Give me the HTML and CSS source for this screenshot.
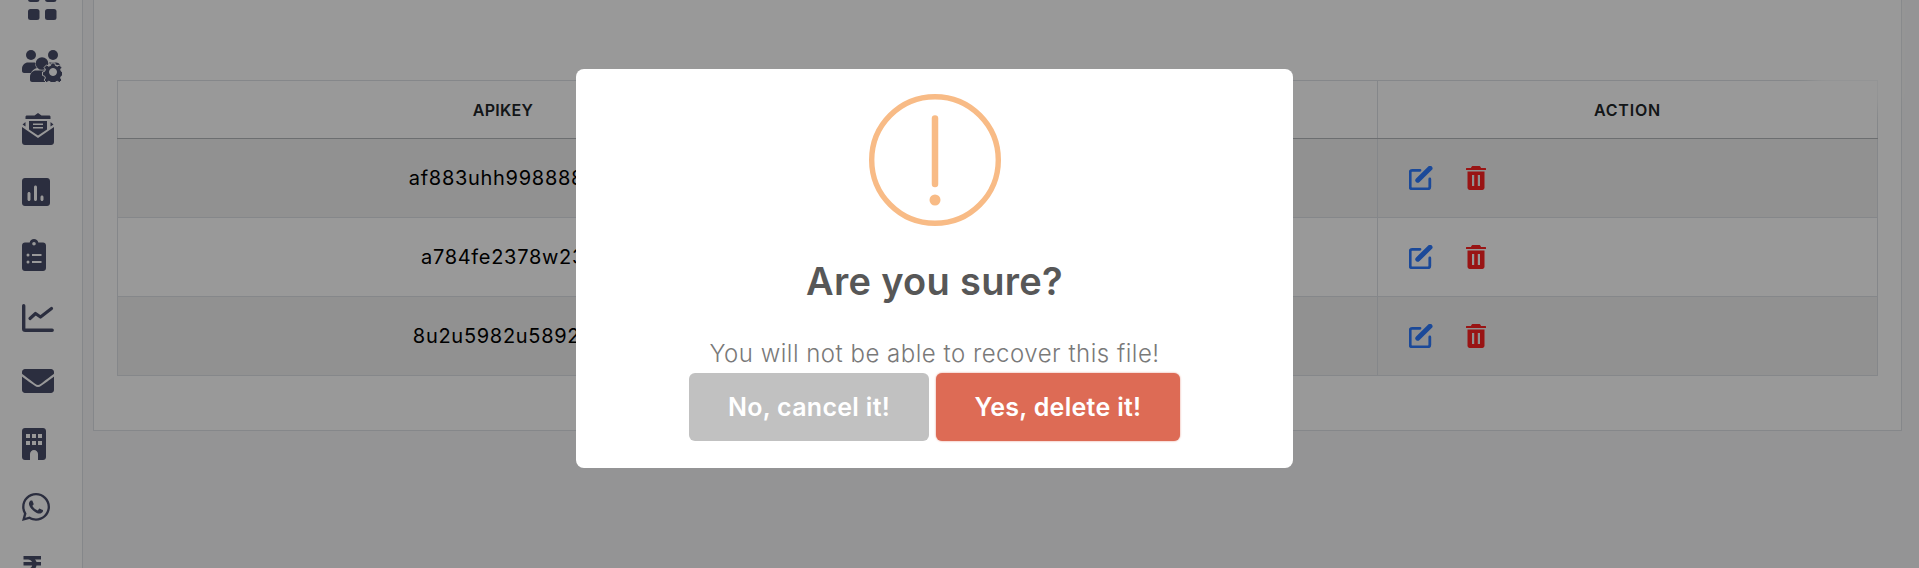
FILE: index.html
```html
<!DOCTYPE html>
<html lang="en">
<head>
  <meta charset="UTF-8">
  <meta name="viewport" content="width=device-width, initial-scale=1.0">
  <title>API Keys</title>
  <link rel="stylesheet" href="styles.css">
</head>
<body>
  <nav class="sidebar">
    <a class="side-item"><svg width="29" height="29" viewBox="0 0 29 29"><rect x="0" y="0" width="11.500" height="11" rx="2.500"/><rect x="17" y="0" width="11.500" height="11" rx="2.500"/><rect x="0" y="18" width="11.500" height="11" rx="2.500"/><rect x="17" y="18" width="11.500" height="11" rx="2.500"/></svg></a>
    <a class="side-item"><svg width="40" height="32" viewBox="0 0 40 32"><circle cx="9" cy="5" r="5"/><circle cx="31" cy="5" r="5"/><circle cx="20" cy="13.500" r="6.300"/><path d="M0 19c0-4 3-6.500 6-6.500h6c1 0 1.500.5 1.500 1-.5 2 .5 3.500 1.500 4.500-3 1-5 2.500-6 5H2c-1 0-2-1-2-2z"/><path d="M27 12.500h7c2 0 3.500 1 4.500 3-3 -1-6-1-8 0-1-.5-2-.5-3.500-3z"/><path d="M8 27c0-4 3-6.500 6-6.500h10c.5 2 .5 4 0 5-1 1-1 4 0 5.500l.5 1H10c-1 0-2-1-2-2z"/><path fill-rule="evenodd" d="M29.200 14.500h3.600l.6 2.400 1.900.8 2.100-1.300 2.500 2.500-1.300 2.100.8 1.900 2.100.6v3.500l-2.100.6-.8 1.900 1.300 2.100-2.500 2.500-2.100-1.300-1.900.8-.6 1.900h-3.600l-.6-1.900-1.900-.8-2.100 1.300-2.500-2.500 1.300-2.100-.8-1.900-2.100-.6v-3.500l2.100-.6.8-1.900-1.300-2.100 2.500-2.500 2.100 1.300 1.900-.8zM31 20a3.500 3.500 0 1 0 0 7 3.500 3.500 0 0 0 0-7z" transform="translate(0 -1.500)" stroke="#fff" stroke-width="1"/></svg></a>
    <a class="side-item"><svg width="32" height="32" viewBox="0 0 32 32"><path fill-rule="evenodd" d="M16 0l3.500 2.500H27c1 0 1.500.5 1.500 1.500v5l3 2.500-3 2v-7.500H3.500v7.500l-3-2 3-2.500V4c0-1 .5-1.500 1.500-1.500h7.500zM7 8h18v8.500l-9 6-9-6zM11 10.500v1.500h10v-1.500zM11 14v1.500h10V14z"/><path d="M0 14l16 11 16-11v15c0 1.700-1.300 3-3 3H3c-1.700 0-3-1.300-3-3z"/></svg></a>
    <a class="side-item"><svg width="28" height="28" viewBox="0 0 28 28"><path fill-rule="evenodd" d="M3 0h22c1.700 0 3 1.300 3 3v22c0 1.700-1.300 3-3 3H3c-1.700 0-3-1.300-3-3V3C0 1.300 1.300 0 3 0zM7 14c-.8 0-1.500.7-1.500 1.500v6c0 .8.7 1.500 1.500 1.500s1.500-.7 1.500-1.500v-6C8.500 14.700 7.800 14 7 14zM13.500 7.500c-.8 0-1.500.7-1.500 1.500v12.500c0 .8.700 1.500 1.500 1.500s1.500-.7 1.500-1.500V9c0-.8-.7-1.500-1.500-1.500zM20 17.500c-.8 0-1.500.7-1.500 1.500v2.500c0 .8.700 1.500 1.500 1.500s1.500-.7 1.500-1.500V19c0-.8-.7-1.500-1.500-1.500z"/></svg></a>
    <a class="side-item"><svg width="24" height="32" viewBox="0 0 24 32"><path fill-rule="evenodd" d="M12 0c2.200 0 4 1.500 4.300 3.500H21c1.700 0 3 1.300 3 3V29c0 1.700-1.300 3-3 3H3c-1.700 0-3-1.300-3-3V6.500c0-1.700 1.300-3 3-3h4.700C8 1.500 9.800 0 12 0zM12 3a1.800 1.800 0 1 0 0 3.600A1.800 1.800 0 0 0 12 3zM6 14.500a1.500 1.500 0 1 0 0 3 1.500 1.500 0 0 0 0-3zM10 15v2h9.500v-2zM6 21.500a1.500 1.500 0 1 0 0 3 1.500 1.500 0 0 0 0-3zM10 22v2h9.500v-2z"/></svg></a>
    <a class="side-item"><svg width="32" height="28" viewBox="0 0 32 28"><path d="M1.700 1.700V24.800c0 .8.7 1.500 1.500 1.500h27" fill="none" stroke-width="3.400" stroke-linecap="round" stroke="currentColor"/><path d="M8 14.500l5.500-5 5 3.500L29.500 4.500" fill="none" stroke-width="3.200" stroke-linecap="round" stroke-linejoin="round" stroke="currentColor"/></svg></a>
    <a class="side-item"><svg width="32" height="32" viewBox="0 0 512 512"><path d="M502.300 190.800c3.900-3.100 9.700-.2 9.700 4.700V400c0 26.500-21.500 48-48 48H48c-26.500 0-48-21.500-48-48V195.600c0-5 5.700-7.800 9.700-4.700 22.400 17.400 52.100 39.500 154.100 113.600 21.100 15.400 56.700 47.800 92.200 47.600 35.700.3 72-32.800 92.300-47.600 102-74.100 131.600-96.300 154-113.700zM256 320c23.200.4 56.600-29.200 73.400-41.400 132.700-96.300 142.800-104.700 173.400-128.700 5.800-4.500 9.200-11.500 9.200-18.900v-19c0-26.500-21.500-48-48-48H48C21.500 64 0 85.500 0 112v19c0 7.400 3.400 14.300 9.200 18.900 30.600 23.900 40.700 32.400 173.400 128.700 16.800 12.200 50.200 41.800 73.400 41.400z"/></svg></a>
    <a class="side-item"><svg width="24" height="32" viewBox="0 0 24 32"><path fill-rule="evenodd" d="M3 0h18c1.700 0 3 1.300 3 3v26c0 1.700-1.300 3-3 3h-5v-6c0-2.200-1.800-4-4-4s-4 1.800-4 4v6H3c-1.700 0-3-1.300-3-3V3C0 1.300 1.300 0 3 0zM4 6v4h4V6zM10 6v4h4V6zM16 6v4h4V6zM4 13v4h4v-4zM10 13v4h4v-4zM16 13v4h4v-4z"/></svg></a>
    <a class="side-item"><svg width="28" height="32" viewBox="0 0 448 512"><path d="M380.900 97.100C339 55.100 283.200 32 223.900 32c-122.400 0-222 99.600-222 222 0 39.100 10.200 77.300 29.600 111L0 480l117.700-30.900c32.400 17.700 68.900 27 106.100 27h.1c122.300 0 224.100-99.600 224.100-222 0-59.300-25.200-115-67.100-157zm-157 341.600c-33.200 0-65.700-8.900-94-25.700l-6.700-4-69.800 18.300L72 359.200l-4.400-7c-18.500-29.400-28.200-63.300-28.200-98.200 0-101.700 82.800-184.500 184.600-184.500 49.300 0 95.600 19.200 130.400 54.100 34.800 34.900 56.200 81.200 56.100 130.500 0 101.800-84.900 184.600-186.600 184.600zm101.200-138.200c-5.500-2.800-32.800-16.200-37.900-18-5.100-1.900-8.800-2.800-12.500 2.800-3.700 5.600-14.300 18-17.600 21.800-3.200 3.700-6.500 4.200-12 1.400-32.600-16.300-54-29.100-75.500-66-5.700-9.800 5.700-9.100 16.300-30.300 1.800-3.700.9-6.900-.5-9.700-1.400-2.800-12.500-30.100-17.100-41.200-4.500-10.800-9.100-9.300-12.500-9.500-3.200-.2-6.900-.2-10.600-.2-3.700 0-9.700 1.400-14.800 6.900-5.100 5.600-19.400 19-19.400 46.300 0 27.300 19.900 53.700 22.600 57.400 2.800 3.700 39.100 59.700 94.800 83.800 35.200 15.200 49 16.500 66.600 13.900 10.700-1.600 32.800-13.400 37.400-26.400 4.600-13 4.600-24.100 3.200-26.400-1.300-2.500-5-3.900-10.500-6.600z"/></svg></a>
    <a class="side-item"><svg width="20" height="32" viewBox="0 0 20 32"><path d="M1.500 2h17.500v3.500H13c.8 1 1.300 1.700 1.500 2.500H19v3.500h-4.500c-.7 3.700-3.700 6-8 6.200L15 30h-5l-8.500-12v-3.500H6c2.200 0 3.800-1.200 4.200-3H1.500V8h8.500c-.6-1.500-2-2.500-4-2.500H1.500z"/></svg></a>
  </nav>

  <main class="content">
    <section class="card">
      <table class="key-table">
        <colgroup>
          <col class="col-key">
          <col class="col-mid">
          <col class="col-action">
        </colgroup>
        <thead>
          <tr>
            <th>APIKEY</th>
            <th></th>
            <th class="head-action">ACTION</th>
          </tr>
        </thead>
        <tbody>
          <tr>
            <td class="key">af883uhh9988888</td>
            <td></td>
            <td class="actions">
              <a class="act"><svg class="ic-edit" width="24" height="24" viewBox="0 0 24 24"><path d="M11 4.300H3a1.800 1.800 0 0 0-1.800 1.800V21a1.800 1.800 0 0 0 1.800 1.800h16a1.800 1.800 0 0 0 1.800-1.800v-8" fill="none" stroke="currentColor" stroke-width="2.800" stroke-linecap="round"/><path d="M8.800 14.200L21 2.300" fill="none" stroke="currentColor" stroke-width="5" stroke-linecap="round"/></svg></a>
              <a class="act"><svg class="ic-trash" width="20" height="24" viewBox="0 0 20 24"><path fill-rule="evenodd" d="M7 0h6c1 0 1.500.5 2 2h4.500c.3 0 .5.200.5.500V4H0V2.500c0-.3.200-.5.500-.5H5c.5-1.500 1-2 2-2zM1.500 5.500h17v16.300c0 1.200-1 2.200-2.200 2.200H3.700c-1.200 0-2.200-1-2.200-2.200zM6 9v11h2.200V9zM11.800 9v11H14V9z"/></svg></a>
            </td>
          </tr>
          <tr>
            <td class="key">a784fe2378w23</td>
            <td></td>
            <td class="actions">
              <a class="act"><svg class="ic-edit" width="24" height="24" viewBox="0 0 24 24"><path d="M11 4.300H3a1.800 1.800 0 0 0-1.800 1.800V21a1.800 1.800 0 0 0 1.800 1.800h16a1.800 1.800 0 0 0 1.800-1.800v-8" fill="none" stroke="currentColor" stroke-width="2.800" stroke-linecap="round"/><path d="M8.800 14.200L21 2.300" fill="none" stroke="currentColor" stroke-width="5" stroke-linecap="round"/></svg></a>
              <a class="act"><svg class="ic-trash" width="20" height="24" viewBox="0 0 20 24"><path fill-rule="evenodd" d="M7 0h6c1 0 1.500.5 2 2h4.500c.3 0 .5.200.5.500V4H0V2.500c0-.3.200-.5.500-.5H5c.5-1.500 1-2 2-2zM1.500 5.500h17v16.300c0 1.200-1 2.200-2.200 2.200H3.700c-1.200 0-2.200-1-2.200-2.200zM6 9v11h2.200V9zM11.800 9v11H14V9z"/></svg></a>
            </td>
          </tr>
          <tr>
            <td class="key">8u2u5982u58925</td>
            <td></td>
            <td class="actions">
              <a class="act"><svg class="ic-edit" width="24" height="24" viewBox="0 0 24 24"><path d="M11 4.300H3a1.800 1.800 0 0 0-1.800 1.800V21a1.800 1.800 0 0 0 1.800 1.800h16a1.800 1.800 0 0 0 1.800-1.800v-8" fill="none" stroke="currentColor" stroke-width="2.800" stroke-linecap="round"/><path d="M8.800 14.200L21 2.300" fill="none" stroke="currentColor" stroke-width="5" stroke-linecap="round"/></svg></a>
              <a class="act"><svg class="ic-trash" width="20" height="24" viewBox="0 0 20 24"><path fill-rule="evenodd" d="M7 0h6c1 0 1.500.5 2 2h4.500c.3 0 .5.200.5.500V4H0V2.500c0-.3.200-.5.500-.5H5c.5-1.500 1-2 2-2zM1.500 5.500h17v16.300c0 1.200-1 2.200-2.200 2.200H3.700c-1.200 0-2.200-1-2.200-2.200zM6 9v11h2.200V9zM11.800 9v11H14V9z"/></svg></a>
            </td>
          </tr>
        </tbody>
      </table>
    </section>
  </main>

  <div class="corner-fade"></div>

  <div class="overlay"></div>
  <div class="modal">
    <svg class="alert-icon" width="132" height="132" viewBox="0 0 132 132">
      <circle cx="66" cy="66" r="63.300" fill="none" stroke="currentColor" stroke-width="5.400"/>
      <path d="M66 24.500V90" fill="none" stroke="currentColor" stroke-width="6.500" stroke-linecap="round"/>
      <circle cx="66" cy="106" r="5.500" fill="currentColor"/>
    </svg>
    <h2 class="modal-title">Are you sure?</h2>
    <p class="modal-text">You will not be able to recover this file!</p>
    <div class="modal-buttons">
      <button class="btn btn-cancel">No, cancel it!</button>
      <button class="btn btn-confirm">Yes, delete it!</button>
    </div>
  </div>
</body>
</html>
```

FILE: styles.css
```css
* {
  box-sizing: border-box;
  margin: 0;
  padding: 0;
}

html, body {
  height: 568px;
  overflow: hidden;
}

body {
  display: flex;
  font-family: Inter, 'Open Sans', sans-serif;
  background: #f7f7f8;
  color: #000;
}

.sidebar {
  width: 83px;
  flex-shrink: 0;
  height: 568px;
  overflow: hidden;
  background: #fff;
  border-right: 1px solid #dee2e6;
  padding: 0 0 0 22px;
  color: #494d69;
}

.side-item {
  display: flex;
  align-items: center;
  height: 63px;
  flex-shrink: 0;
}

.side-item:first-child {
  align-items: flex-end;
  margin-top: -30px;
  margin-bottom: 14px;
  height: 50px;
  padding-left: 6px;
}

.side-item svg {
  fill: currentColor;
}

.content {
  flex: 1;
  min-width: 0;
  padding: 0 17px 0 10px;
}

.card {
  background: #fff;
  border: 1px solid #dee2e6;
  margin-top: -40px;
  padding: 119px 23px 54px;
}

.key-table {
  width: 100%;
  table-layout: fixed;
  border-collapse: collapse;
  border: 1px solid #dee2e6;
}

.col-key { width: 771px; }
.col-action { width: 500px; }

.key-table th {
  height: 58px;
  font-size: 16px;
  font-weight: 600;
  letter-spacing: 0.3px;
  color: #212529;
  text-align: center;
  border-bottom: 1px solid #b5b8bb;
  border-left: 1px solid #dee2e6;
}

.key-table th.head-action {
  letter-spacing: 0.8px;
}

.key-table td {
  height: 79px;
  text-align: center;
  border-top: 1px solid #dee2e6;
  border-left: 1px solid #dee2e6;
}

.key-table tbody tr:nth-child(odd) {
  background: #f2f2f2;
}

.key-table td.key {
  font-size: 20px;
  letter-spacing: 0.7px;
}

.key-table td.actions {
  text-align: left;
  padding-left: 31px;
}

.act {
  display: inline-block;
  vertical-align: middle;
  margin-right: 28px;
  height: 24px;
}

.ic-edit { color: #2d7bff; }
.ic-trash { color: #ff2222; fill: currentColor; }

.corner-fade {
  position: fixed;
  top: -10px;
  left: 1812px;
  width: 84px;
  height: 120px;
  background: rgba(255, 255, 255, 0.7);
  border-radius: 18px;
  filter: blur(8px);
}

.overlay {
  position: fixed;
  inset: 0;
  background: rgba(0, 0, 0, 0.4);
}

.modal {
  position: fixed;
  top: 69px;
  left: 576px;
  width: 717px;
  height: 399px;
  background: #fff;
  border-radius: 8px;
  padding-top: 25px;
  display: flex;
  flex-direction: column;
  align-items: center;
}

.alert-icon {
  color: #f8bb86;
  flex-shrink: 0;
}

.modal-title {
  margin-top: 31px;
  font-size: 38px;
  line-height: 48px;
  font-weight: 600;
  letter-spacing: 0.3px;
  color: #575757;
}

.modal-text {
  margin-top: 34px;
  font-size: 24px;
  line-height: 30px;
  font-weight: 300;
  letter-spacing: 0.5px;
  color: #797979;
}

.modal-buttons {
  display: flex;
  gap: 7px;
  margin-top: 4px;
}

.btn {
  height: 68px;
  border: none;
  border-radius: 6px;
  color: #fff;
  font-family: inherit;
  font-size: 25px;
  font-weight: 600;
  letter-spacing: 0.3px;
}

.btn-cancel {
  width: 240px;
  background: #c1c1c1;
}

.btn-confirm {
  width: 244px;
  background: #dd6b55;
  box-shadow: 0 0 2px rgba(221, 107, 85, 0.8);
}
```
